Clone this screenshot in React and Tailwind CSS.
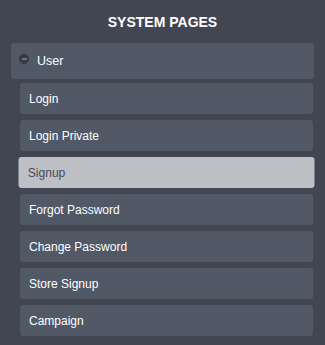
import React from "react";

const pages = [
  "Login",
  "Login Private",
  "Signup",
  "Forgot Password",
  "Change Password",
  "Store Signup",
  "Campaign",
];

const App = () => {
  const active = "Signup";

  return (
    <div
      className="w-[325px] h-[345px] bg-[#414652] overflow-hidden"
      style={{ fontFamily: '"Liberation Sans", Arial, sans-serif' }}
    >
      <div className="pt-[14px] h-[43px] text-center text-white font-bold text-[14px] leading-[16px]">
        SYSTEM PAGES
      </div>

      <div className="px-[11px]">
        {/* Group header */}
        <div className="h-[36px] bg-[#515866] rounded-[3px] flex items-center pl-[8px]">
          <span className="w-[10px] h-[10px] rounded-full bg-[#353941] flex items-center justify-center -mt-[5px]">
            <span className="block w-[5px] h-[2px] bg-[#6e737c]" />
          </span>
          <span className="ml-[8px] text-white text-[12.5px] leading-none">
            User
          </span>
        </div>

        {/* Items */}
        <div className="pl-[9px] pr-[1px] pt-[4px] flex flex-col gap-[6px]">
          {pages.map((name) => (
            <div
              key={name}
              className={
                name === active
                  ? "h-[31px] rounded-[3px] bg-[#bec0c6] flex items-center pl-[9px] text-[#474c57] text-[12px] scale-x-[1.01] origin-center"
                  : "h-[31px] rounded-[3px] bg-[#515866] flex items-center pl-[9px] text-white text-[12px]"
              }
            >
              {name}
            </div>
          ))}
        </div>
      </div>
    </div>
  );
};

export default App;
